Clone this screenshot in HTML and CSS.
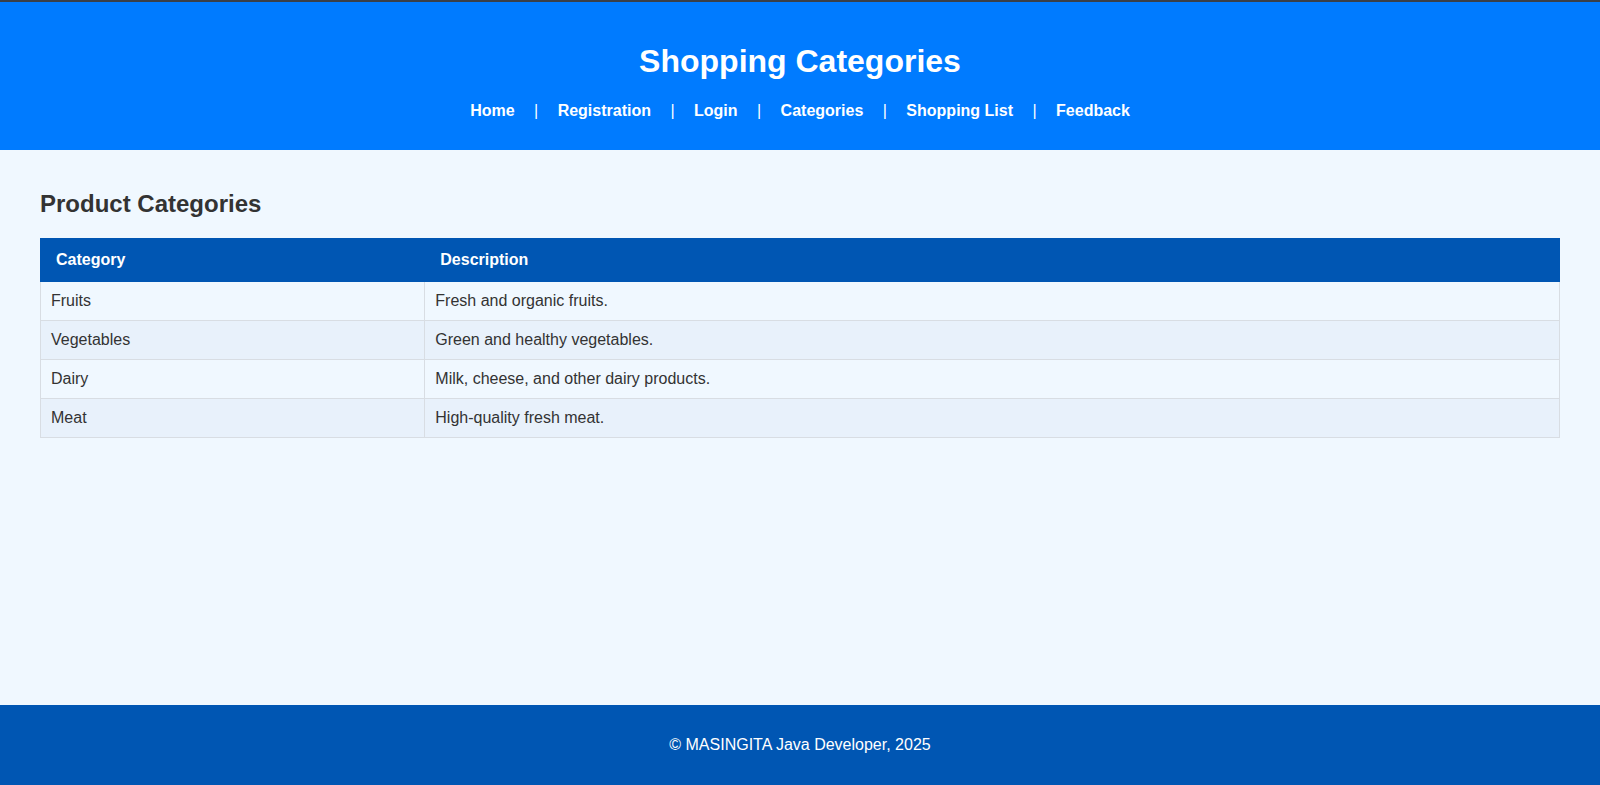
FILE: index.html
```html
<!DOCTYPE html>
<html lang="en">
<head>
<meta charset="UTF-8">
<title>Shopping Categories</title>
<link rel="stylesheet" href="styles.css">
</head>
<body>
<header class="site-header">
  <h1 class="site-title">Shopping Categories</h1>
  <nav class="site-nav">
    <a href="#">Home</a> | <a href="#">Registration</a> | <a href="#">Login</a> | <a href="#">Categories</a> | <a href="#">Shopping List</a> | <a href="#">Feedback</a>
  </nav>
</header>
<main class="content">
  <h2 class="section-title">Product Categories</h2>
  <table class="cat-table">
    <thead>
      <tr><th class="col-cat">Category</th><th>Description</th></tr>
    </thead>
    <tbody>
      <tr><td>Fruits</td><td>Fresh and organic fruits.</td></tr>
      <tr><td>Vegetables</td><td>Green and healthy vegetables.</td></tr>
      <tr><td>Dairy</td><td>Milk, cheese, and other dairy products.</td></tr>
      <tr><td>Meat</td><td>High-quality fresh meat.</td></tr>
    </tbody>
  </table>
</main>
<footer class="site-footer">
  <p>&copy; MASINGITA Java Developer, 2025</p>
</footer>
</body>
</html>
```
FILE: styles.css
```css
html, body {
  margin: 0;
  padding: 0;
}
body {
  font-family: "Liberation Sans", Arial, sans-serif;
  background: #f0f8ff;
  color: #333;
  min-height: 100vh;
  display: flex;
  flex-direction: column;
  box-sizing: border-box;
  border-top: 2px solid #3a3f47;
}
.site-header {
  background: #007bff;
  color: #fff;
  text-align: center;
  padding: 20px 20px 30px;
}
.site-title {
  font-size: 32px;
  margin: 21.44px 0;
  line-height: normal;
}
.site-nav {
  font-size: 16px;
  line-height: normal;
  color: #fff;
}
.site-nav a {
  color: #fff;
  font-weight: bold;
  text-decoration: none;
  margin: 0 15px;
}
.content {
  flex: 1;
  padding: 20px 40px;
}
.section-title {
  font-size: 24px;
  margin: 19.92px 0;
  line-height: normal;
}
.cat-table {
  width: 100%;
  border-collapse: collapse;
  font-size: 16px;
}
.cat-table th {
  background: #0056b3;
  color: #fff;
  text-align: left;
  padding: 12px 15px;
  line-height: normal;
  border: 1px solid #0056b3;
}
.cat-table .col-cat {
  width: 25.3%;
}
.cat-table td {
  padding: 10px;
  line-height: normal;
  border: 1px solid #d8dde3;
}
.cat-table tbody tr:nth-child(even) {
  background: #e8f1fb;
}
.site-footer {
  background: #0056b3;
  color: #fff;
  text-align: center;
  padding: 15px 20px;
  font-size: 16px;
}
.site-footer p {
  margin: 16px 0;
  line-height: normal;
}
```
